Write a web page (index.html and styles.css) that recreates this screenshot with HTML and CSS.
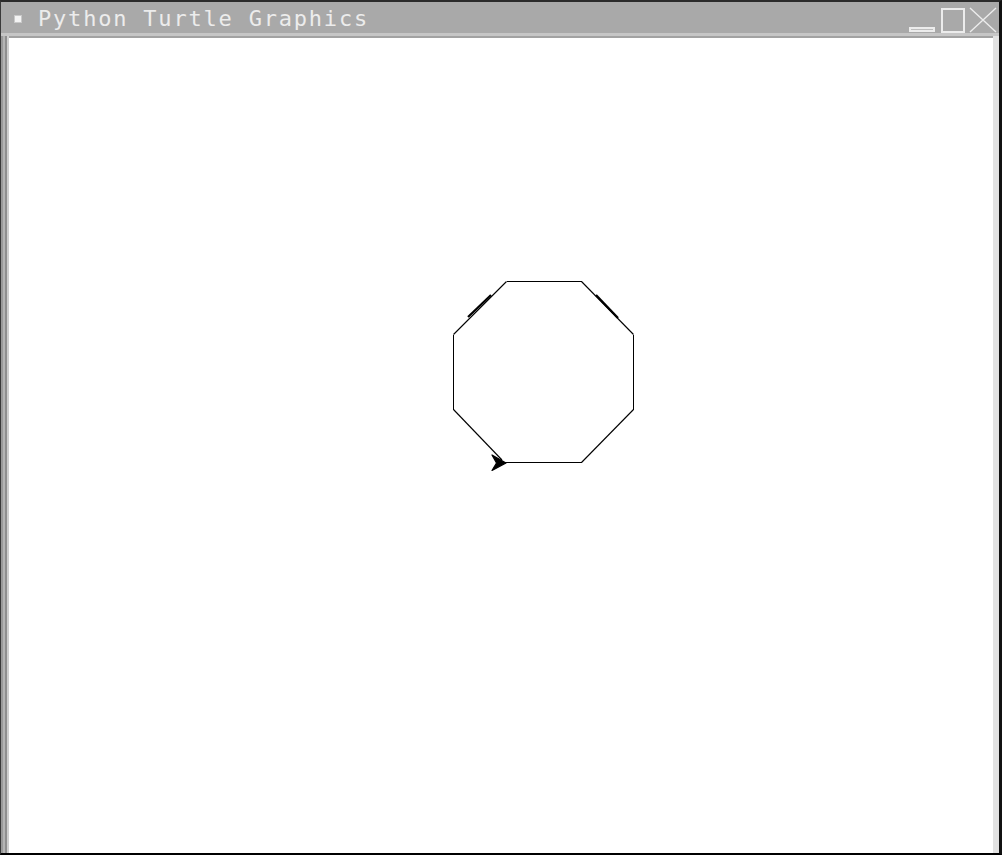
FILE: index.html
```html
<!DOCTYPE html>
<html>
<head>
<meta charset="utf-8">
<link rel="stylesheet" href="styles.css">
</head>
<body>
<div class="window">
  <div class="titlebar">
    <span class="menu-box"></span>
    <span class="title">Python Turtle Graphics</span>
    <div class="controls">
      <span class="btn-min"></span>
      <span class="btn-max"></span>
      <svg class="btn-close" width="28" height="26" viewBox="0 0 28 26"><path d="M1 1 L27 25 M27 1 L1 25" stroke="#ececec" stroke-width="1.4" fill="none"/></svg>
    </div>
  </div>
  <div class="sep"></div>
  <div class="frame">
    <div class="canvas">
      <svg class="drawing" width="984" height="814" viewBox="9 39 984 814">
        <g stroke="#000" stroke-width="1" fill="none" shape-rendering="crispEdges">
          <path d="M506.5 282.5 L581.5 282.5"/>
          <path d="M633.5 335.5 L633.5 410.5"/>
          <path d="M453.5 335.5 L453.5 410.5"/>
          <path d="M499 463.5 L581.5 463.5"/>
        </g>
        <g stroke="#000" stroke-width="1.1" fill="none">
          <path d="M581.5 282.5 L633.5 335.5"/>
          <path d="M633.5 410.5 L581.5 463.5"/>
          <path d="M453.5 410.5 L502 461"/>
          <path d="M453.5 335.5 L506.5 282.5"/>
        </g>
        <g stroke="#000" stroke-width="2.2" fill="none">
          <path d="M468 318 L491 296"/>
          <path d="M596 296 L618 319"/>
        </g>
        <polygon points="506,464 492,456 496.5,464 492,471.5" fill="#000" stroke="#000" stroke-width="1.2" stroke-linejoin="round"/>
      </svg>
    </div>
  </div>
</div>
</body>
</html>
```

FILE: styles.css
```css
html, body {
  margin: 0;
  padding: 0;
  background: #000;
}
.window {
  width: 1002px;
  height: 855px;
  box-sizing: border-box;
  background: #a9a9a9;
  border-top: 2px solid #2b2b2b;
  border-left: 1px solid #3a3a3a;
  border-right: 3px solid #111;
  border-bottom: 2px solid #000;
  display: flex;
  flex-direction: column;
}
.titlebar {
  height: 31px;
  display: flex;
  align-items: center;
  background: #a9a9a9;
  position: relative;
}
.menu-box {
  width: 6px;
  height: 6px;
  background: #f4f4f4;
  border: 1px solid #c9c9c9;
  margin-left: 13px;
  margin-top: 2px;
}
.title {
  font-family: "DejaVu Sans Mono", monospace;
  font-size: 22px;
  letter-spacing: 1.8px;
  color: #ececec;
  margin-left: 16px;
  margin-top: 2px;
}
.controls {
  margin-left: auto;
  display: flex;
  align-items: flex-end;
  height: 26px;
  margin-top: 4px;
  margin-right: 2px;
}
.btn-min {
  width: 22px;
  height: 1px;
  border: 2px solid #ececec;
  background: #bdbdbd;
  margin-bottom: 1px;
  margin-right: 6px;
}
.btn-max {
  width: 20px;
  height: 21px;
  border: 2px solid #ececec;
  margin-right: 4px;
}
.btn-close {
  display: block;
}
.sep {
  height: 3px;
  background: #c6c6c6;
}
.frame {
  flex: 1;
  display: flex;
  padding: 2px 6px 0 8px;
  background: #a2a2a2;
  background-image: linear-gradient(90deg, #9a9a9a 0, #9a9a9a 2px, #b5b5b5 2px, #b5b5b5 4px, #8f8f8f 4px, #8f8f8f 6px, #cfcfcf 6px, #cfcfcf 8px, transparent 8px),
                    linear-gradient(270deg, #e2e2e2 0, #e2e2e2 6px, transparent 6px);
}
.canvas {
  flex: 1;
  background: #fff;
  overflow: hidden;
}
.drawing {
  display: block;
}
```
